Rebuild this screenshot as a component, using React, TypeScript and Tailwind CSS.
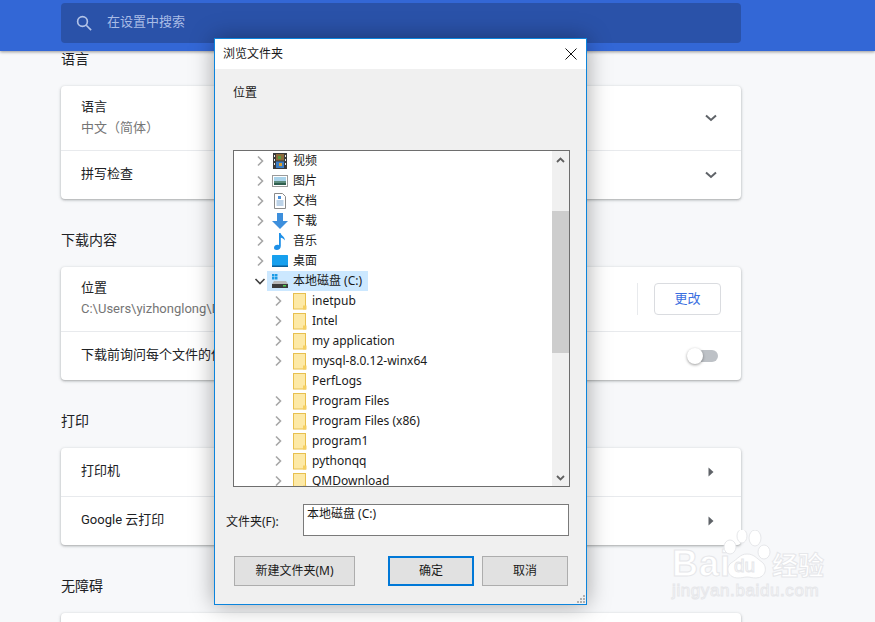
import React from 'react';

const Chevron = () => (
  <svg width="12" height="8" viewBox="0 0 12 8" fill="none" stroke="#5f6368" strokeWidth="2">
    <path d="M1 1.5l5 4.5 5-4.5" />
  </svg>
);

const Arrow = () => (
  <svg width="6" height="10" viewBox="0 0 6 10" fill="#5f6368">
    <path d="M0.5 0.5l5 4.5-5 4.5z" />
  </svg>
);

const SectionTitle = ({ text, className }: { text: string; className: string }) => (
  <div className={`text-sm leading-5 text-[#202124] ${className}`}>{text}</div>
);

const Card = ({ children, className = '' }: { children: React.ReactNode; className?: string }) => (
  <div className={`rounded bg-white shadow-[0_1px_2px_rgba(60,64,67,0.3),0_1px_3px_1px_rgba(60,64,67,0.12)] ${className}`}>
    {children}
  </div>
);

const Row = ({ children, h, border, pr = 'pr-6' }: { children: React.ReactNode; h: string; border?: boolean; pr?: string }) => (
  <div className={`flex items-center justify-between pl-5 ${pr} ${h} ${border ? 'border-t border-[#e8eaed]' : ''}`}>
    {children}
  </div>
);

const TreeArrow = ({ open }: { open?: boolean }) =>
  open ? (
    <svg width="12" height="12" viewBox="0 0 12 12" fill="none" stroke="#404040" strokeWidth="1.6">
      <path d="M1.5 4l4.5 4.5L10.5 4" />
    </svg>
  ) : (
    <svg width="12" height="12" viewBox="0 0 12 12" fill="none" stroke="#a6a6a6" strokeWidth="1.6">
      <path d="M4 1.5L8.5 6 4 10.5" />
    </svg>
  );

const FolderIcon = () => (
  <svg width="14" height="17" viewBox="0 0 14 17">
    <rect x="0.5" y="0.5" width="12" height="15.5" fill="#fde9a6" stroke="#e8c04e" />
    <path d="M10 16.5v-4h3.5v4z" fill="#f5cf62" />
  </svg>
);

const VideoIcon = () => (
  <svg width="14" height="16" viewBox="0 0 14 16">
    <rect width="14" height="16" fill="#3a3a3a" />
    <rect x="3" y="1" width="8" height="6.5" fill="#8a6a3a" />
    <rect x="3" y="8.5" width="8" height="6.5" fill="#3b7cc4" />
    <rect x="5" y="3" width="3" height="3" fill="#5a9a3a" />
    <rect x="6" y="10" width="3" height="3" fill="#d8a030" />
    <path d="M1 2h1v2H1zM1 6h1v2H1zM1 10h1v2H1zM12 2h1v2h-1zM12 6h1v2h-1zM12 10h1v2h-1z" fill="#eee" />
  </svg>
);

const PictureIcon = () => (
  <svg width="16" height="12" viewBox="0 0 16 12">
    <rect x="0.5" y="0.5" width="15" height="11" fill="#fff" stroke="#9a9a9a" />
    <rect x="2" y="2" width="12" height="4" fill="#a9d3ea" />
    <rect x="2" y="6" width="12" height="2" fill="#5d8c7c" />
    <rect x="2" y="8" width="12" height="2" fill="#2f5f4f" />
  </svg>
);

const DocIcon = () => (
  <svg width="12" height="16" viewBox="0 0 12 16">
    <path d="M0.5 0.5h8l3 3v12h-11z" fill="#fff" stroke="#8a8a8a" />
    <path d="M4 3h3v3H4z" fill="#4a90d9" />
    <path d="M2.5 8h7M2.5 10h7M2.5 12h7" stroke="#7aa6d0" />
  </svg>
);

const DownloadIcon = () => (
  <svg width="16" height="16" viewBox="0 0 16 16">
    <path d="M5 0h6v8h5l-8 8-8-8h5z" fill="#3d8fdc" />
  </svg>
);

const MusicIcon = () => (
  <svg width="12" height="17" viewBox="0 0 12 17">
    <path d="M5 0h1.6c.3 2.5 4.4 3.5 4.4 7.5-1-1.5-2.5-2.5-4.2-2.8V13c0 2.4-1.8 4-4 4C1 17 0 16 0 14.7 0 13 1.7 11.8 3.3 11.8c.6 0 1.2.1 1.7.4z" fill="#1e90e8" />
  </svg>
);

const DesktopIcon = () => (
  <svg width="16" height="12" viewBox="0 0 16 12">
    <rect width="16" height="12" rx="0.5" fill="#17a0ee" />
    <rect y="10.5" width="16" height="1.5" fill="#0a5f9a" />
  </svg>
);

const DriveIcon = () => (
  <svg width="16" height="14" viewBox="0 0 16 14">
    <path d="M0 0h2.5v2.5H0zM3 0h2.5v2.5H3zM0 3h2.5v2.5H0zM3 3h2.5v2.5H3z" fill="#1a9be6" />
    <path d="M2 7h12l2 3H0z" fill="#b8b8b8" />
    <rect y="10" width="16" height="4" fill="#3c3c3c" />
    <rect x="11" y="11" width="3" height="1.5" fill="#4fd04f" />
  </svg>
);

const treeItems: { label: string; icon: React.ReactNode; level: number; arrow?: boolean; open?: boolean; selected?: boolean }[] = [
  { label: '视频', icon: <VideoIcon />, level: 0, arrow: true },
  { label: '图片', icon: <PictureIcon />, level: 0, arrow: true },
  { label: '文档', icon: <DocIcon />, level: 0, arrow: true },
  { label: '下载', icon: <DownloadIcon />, level: 0, arrow: true },
  { label: '音乐', icon: <MusicIcon />, level: 0, arrow: true },
  { label: '桌面', icon: <DesktopIcon />, level: 0, arrow: true },
  { label: '本地磁盘 (C:)', icon: <DriveIcon />, level: 0, arrow: true, open: true, selected: true },
  { label: 'inetpub', icon: <FolderIcon />, level: 1, arrow: true },
  { label: 'Intel', icon: <FolderIcon />, level: 1, arrow: true },
  { label: 'my application', icon: <FolderIcon />, level: 1, arrow: true },
  { label: 'mysql-8.0.12-winx64', icon: <FolderIcon />, level: 1, arrow: true },
  { label: 'PerfLogs', icon: <FolderIcon />, level: 1 },
  { label: 'Program Files', icon: <FolderIcon />, level: 1, arrow: true },
  { label: 'Program Files (x86)', icon: <FolderIcon />, level: 1, arrow: true },
  { label: 'program1', icon: <FolderIcon />, level: 1, arrow: true },
  { label: 'pythonqq', icon: <FolderIcon />, level: 1, arrow: true },
  { label: 'QMDownload', icon: <FolderIcon />, level: 1, arrow: true },
];

const FolderDialog = () => (
  <div className="absolute left-[214px] top-[38px] z-20 flex h-[567px] w-[373px] flex-col border border-[#0c84dc] bg-[#f0f0f0] font-['Noto_Sans','Noto_Sans_CJK_SC',sans-serif] text-xs text-[#1a1a1a] shadow-[0_0_22px_rgba(0,0,0,0.35)]">
    <div className="flex h-[30px] shrink-0 items-center justify-between bg-white pl-[8px] pr-[9px]">
      <span>浏览文件夹</span>
      <svg width="12" height="12" viewBox="0 0 12 12" fill="none" stroke="#111" strokeWidth="1">
        <path d="M0.5 0.5l11 11M11.5 0.5l-11 11" />
      </svg>
    </div>

    <div className="h-[81px] shrink-0 pl-[18px] pt-[16px] leading-4">位置</div>

    <div className="ml-[18px] flex h-[337px] w-[337px] shrink-0 border border-[#6e6e6e] bg-white">
      <div className="min-w-0 flex-1 overflow-hidden">
        {treeItems.map((item) => (
          <div key={item.label} className={`flex h-5 items-center ${item.level ? 'pl-[37px]' : 'pl-[19px]'}`}>
            <div className="flex w-[14px] shrink-0 justify-center">
              {item.arrow && <TreeArrow open={item.open} />}
            </div>
            <div className={`flex h-5 items-center ${item.selected ? 'bg-[#cce8ff]' : ''}`}>
              <div className={`flex w-[20px] shrink-0 justify-center ${item.level ? 'ml-[5px]' : 'ml-[3px]'}`}>{item.icon}</div>
              <span className={`whitespace-nowrap leading-5 ${item.level ? 'pl-[2px]' : 'pl-[3px] pr-[6px]'}`}>{item.label}</span>
            </div>
          </div>
        ))}
      </div>
      <div className="flex w-[17px] shrink-0 flex-col bg-[#f0f0f0]">
        <div className="flex h-[17px] items-center justify-center">
          <svg width="9" height="6" viewBox="0 0 9 6" fill="none" stroke="#606060" strokeWidth="1.8">
            <path d="M1 5l3.5-3.5L8 5" />
          </svg>
        </div>
        <div className="mt-[43px] h-[142px] bg-[#cdcdcd]" />
        <div className="flex-1" />
        <div className="flex h-[17px] items-center justify-center">
          <svg width="9" height="6" viewBox="0 0 9 6" fill="none" stroke="#606060" strokeWidth="1.8">
            <path d="M1 1l3.5 3.5L8 1" />
          </svg>
        </div>
      </div>
    </div>

    <div className="mt-[17px] flex shrink-0 items-center pl-[11px]">
      <span className="w-[77px] pt-[3px]">文件夹(F):</span>
      <div className="h-[32px] w-[266px] border border-[#7a7a7a] bg-white pl-[3px] leading-[17px]">本地磁盘 (C:)</div>
    </div>

    <div className="mt-[20px] flex shrink-0 pl-[19px]">
      <button className="h-[30px] w-[121px] border border-[#adadad] bg-[#e1e1e1]">新建文件夹(M)</button>
      <button className="ml-[33px] h-[30px] w-[86px] border-2 border-[#0078d7] bg-[#e1e1e1]">确定</button>
      <button className="ml-[8px] h-[30px] w-[86px] border border-[#adadad] bg-[#e1e1e1]">取消</button>
    </div>

    <div className="absolute bottom-[1px] right-[1px] grid grid-cols-3 gap-px">
      {[0, 0, 1, 0, 1, 1, 1, 1, 1].map((on, i) => (
        <div key={i} className={`h-[2px] w-[2px] ${on ? 'bg-[#b0b0b0]' : ''}`} />
      ))}
    </div>
  </div>
);

const Watermark = () => (
  <div className="pointer-events-none absolute left-[672px] top-[530px] z-10 h-[92px] w-[200px] text-white [-webkit-text-stroke:1px_#e6e7ea]">
    <div className="absolute left-0 top-[12px] font-['Liberation_Sans',sans-serif] text-[36px] font-bold leading-[44px] tracking-[1px]">
      Bai
    </div>
    <svg className="absolute left-[51px] top-0" width="48" height="50" viewBox="0 0 48 50" fill="#fff" stroke="#e6e7ea" strokeWidth="1">
      <ellipse cx="7" cy="17" rx="6" ry="7" />
      <ellipse cx="19" cy="6" rx="5" ry="7" />
      <ellipse cx="32" cy="8" rx="6" ry="8" />
      <ellipse cx="41" cy="22" rx="6" ry="7" />
      <path d="M24 24c7 0 9 4 15 8 6 5 4 16-6 16-4 0-6-1-9-1s-5 1-9 1C5 48 2 38 8 33c7-4 9-9 16-9z" />
      <text x="11" y="42" fontSize="19" fontFamily="Liberation Sans" fill="#fff">du</text>
    </svg>
    <div className="absolute left-[100px] top-[21px] text-[26px] font-bold leading-[30px]">经验</div>
    <div className="absolute left-0 top-[50px] font-['Liberation_Sans',sans-serif] text-[17px] leading-[22px] tracking-[0.6px]">
      jingyan.baidu.com
    </div>
  </div>
);

export default function App() {
  return (
    <div className="relative h-[622px] w-[875px] overflow-hidden bg-[#f7f8fa] font-['Roboto','Noto_Sans_CJK_SC',sans-serif]">
      <header className="relative z-10 flex h-[51px] items-start bg-[#3367d6] pl-[61px] pt-[3px] shadow-[0_1px_3px_rgba(0,0,0,0.4)]">
        <div className="flex h-10 w-[680px] items-center rounded-sm bg-[#2a52a9] pl-[14px]">
          <svg width="18" height="18" viewBox="0 0 24 24" fill="none" stroke="#b3c4e8" strokeWidth="2.2">
            <circle cx="10" cy="10" r="6.5" />
            <path d="M15 15l6.5 6.5" />
          </svg>
          <span className="ml-[14px] pb-[2px] text-[13px] text-[#a9bce6]">在设置中搜索</span>
        </div>
      </header>

      <main className="ml-[61px] w-[680px]">
        <SectionTitle text="语言" className="mt-[-2px]" />
        <Card className="mt-[17px]">
          <Row h="h-[64px]">
            <div className="pb-[2px]">
              <div className="text-[13px] leading-[21px] text-[#202124]">语言</div>
              <div className="text-[13px] leading-[21px] text-[#757575]">中文（简体）</div>
            </div>
            <Chevron />
          </Row>
          <Row h="h-[49px]" border>
            <span className="pb-[2px] text-[13px] text-[#202124]">拼写检查</span>
            <Chevron />
          </Row>
        </Card>

        <SectionTitle text="下载内容" className="mt-[31px]" />
        <Card className="mt-[17px]">
          <Row h="h-[64px]" pr="pr-5">
            <div className="pb-[2px]">
              <div className="text-[13px] leading-[21px] text-[#202124]">位置</div>
              <div className="text-[13px] leading-[21px] text-[#757575]">C:\Users\yizhonglong\Downloads</div>
            </div>
            <div className="flex items-center">
              <div className="mr-[16px] h-8 w-px bg-[#e8eaed]" />
              <button className="h-8 w-[67px] rounded border border-[#dadce0] bg-white text-[13px] text-[#3b6fe0]">更改</button>
            </div>
          </Row>
          <Row h="h-[49px]" border pr="pr-[23px]">
            <span className="pb-[2px] text-[13px] text-[#202124]">下载前询问每个文件的保存位置</span>
            <div className="relative h-3 w-[30px] rounded-full bg-[#bdc1c6]">
              <div className="absolute left-[-1px] top-[-2px] h-4 w-4 rounded-full bg-white shadow-[0_1px_3px_rgba(0,0,0,0.4)]" />
            </div>
          </Row>
        </Card>

        <SectionTitle text="打印" className="mt-[31px]" />
        <Card className="mt-[17px]">
          <Row h="h-[48px]" pr="pr-[27px]">
            <span className="pb-[2px] text-[13px] text-[#202124]">打印机</span>
            <Arrow />
          </Row>
          <Row h="h-[49px]" border pr="pr-[27px]">
            <span className="pb-[2px] text-[13px] text-[#202124]">Google 云打印</span>
            <Arrow />
          </Row>
        </Card>

        <SectionTitle text="无障碍" className="mt-[31px]" />
        <Card className="mt-[17px] h-[60px]">
          <div />
        </Card>
      </main>

      <FolderDialog />
      <Watermark />
    </div>
  );
}
